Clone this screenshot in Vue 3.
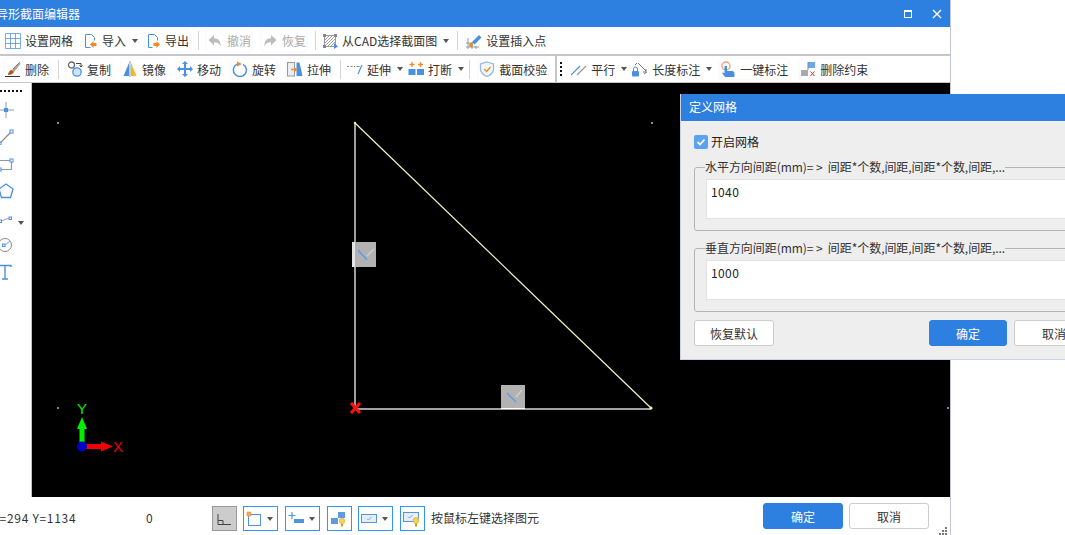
<script setup>
const B = '#4a90e2', O = '#f08a24', G = '#8c8c8c'
const icons = {
  grid: `<path d="M1 1.500h15v15H1zM6 1.500v15M11 1.500v15M1 6.500h15M1 11.500h15" transform="translate(-.5 -1)" fill="none" stroke="${B}" stroke-opacity=".75"/>`,
  imp: `<path d="M3.500 1.500h6l3 3v3M3.500 1.500v13h5" fill="none" stroke="${B}"/><path d="M8 11.500l3.500-3.500v2h3v3h-3v2z" fill="${O}"/>`,
  exp: `<path d="M3.500 1.500h6l3 3v3M3.500 1.500v13h4" fill="none" stroke="${B}"/><path d="M15 11.500L11.500 8v2h-3v3h3v2z" fill="${O}"/>`,
  undo: `<path d="M1.500 7L7 2v3.200c4.500 0 7 3 6.500 8-1-3-3-4-6.500-4V12.500z" fill="#bdbdbd"/>`,
  redo: `<path d="M14.500 7L9 2v3.200c-4.500 0-7 3-6.500 8 1-3 3-4 6.500-4v3.300z" fill="#bdbdbd"/>`,
  cad: `<rect x="2.500" y="2.500" width="11" height="11" fill="none" stroke="#999"/><path d="M3 7l4-4M3 10l7-7M3 13L13 3M6 13l7-7M9 13l4-4" stroke="#888" stroke-width=".8"/><rect x="1" y="1" width="3" height="3" fill="#888"/><rect x="12" y="1" width="3" height="3" fill="#888"/><rect x="1" y="12" width="3" height="3" fill="#888"/><path d="M12 10v6l4-2.500z" fill="${B}"/>`,
  insert: `<path d="M2 5v11M6 9v7M10 13v3M0 14h13M0 10h7" stroke="#999" fill="none"/><path d="M6 9l7-7 2.500 2.500-7 7z" fill="${B}"/><circle cx="5" cy="12" r="2" fill="${O}"/>`,
  del: `<path d="M15 1L7 9l2 2 6.500-8z" fill="#b8a58f"/><path d="M14.500 1.500L8 8" stroke="#777" fill="none"/><path d="M3 14c0-3 2-5 4-5l2 2c-1 2-3 3-6 3z" fill="#b5561f"/><path d="M0 15.500h15" stroke="#333"/>`,
  copy: `<circle cx="4.500" cy="4" r="3" fill="none" stroke="#666" stroke-width="1.300"/><circle cx="10" cy="11" r="4.200" fill="#cfe2f7" stroke="${B}" stroke-width="1.300"/><path d="M9 2.500h5v3M12.500 4.500l1.500 1.500 1.500-1.500" fill="none" stroke="#444"/>`,
  mirror: `<path d="M7 2v13H1.500z" fill="${B}"/><path d="M9 2v13h5.500z" fill="#f5b81f"/><path d="M8 0v16" stroke="#999"/>`,
  move: `<path d="M8 0l3 3H9v4h4V5l3 3-3 3V9H9v4h2l-3 3-3-3h2V9H3v2L0 8l3-3v2h4V3H5z" fill="${B}"/>`,
  rotate: `<path d="M5 3.200A6.500 6.500 0 1 0 11 3.300" fill="none" stroke="${B}" stroke-width="1.400"/><path d="M5 .5l5 2.500-5 2.500z" fill="${O}"/>`,
  stretch: `<rect x=".5" y="1.500" width="7" height="13.500" fill="#eee" stroke="#999"/><path d="M9.500 1.500h3l3 13.500h-6z" fill="${B}"/><path d="M4 8.500h4" stroke="${O}" stroke-width="1.500"/><path d="M7.500 6l3 2.500-3 2.500z" fill="${O}"/>`,
  extend: `<path d="M0 5.500h8" stroke="#888" stroke-dasharray="2 1.500"/><path d="M11 13l4-9" stroke="${B}" stroke-width="1.200"/><path d="M9.500 5.500h3" stroke="#888"/>`,
  brk: `<rect x=".5" y="8" width="7" height="6" fill="${B}"/><rect x="9" y="8" width="7" height="6" fill="${B}"/><path d="M4 1v5M1.500 3.500h5M12.500 1v5M10 3.500h5" stroke="${O}" stroke-width="1.300"/>`,
  check: `<path d="M8 1l6.500 2v5c0 3.500-3 6-6.500 7.500C4.500 14 1.500 11.500 1.500 8V3z" fill="#f4f8fd" stroke="#8fb8ea" stroke-width="1.300"/><path d="M5 8l2.500 2.500L11.500 6" fill="none" stroke="${O}" stroke-width="1.300"/>`,
  para: `<path d="M0 14L9 5" stroke="${B}" stroke-width="1.200"/><path d="M6 14l9-9" stroke="#999" stroke-width="1.200"/>`,
  length: `<rect x="0" y="10" width="7" height="5.500" rx="1" fill="${B}"/><path d="M1.500 10V8a2 2 0 0 1 4 0v2" fill="none" stroke="${B}"/><path d="M3 4l2-2M6 2l8 8M14 8v3h-3" fill="none" stroke="#777"/><path d="M12 13l3-2" stroke="#777"/>`,
  one: `<circle cx="6" cy="5" r="4" fill="none" stroke="#f0a080" stroke-width="1.400"/><path d="M4.500 5h2.500v5h5c1.500 0 2.500 1 2.500 2.500V16H5L2 12l1.500-.5 1 1z" fill="${B}"/>`,
  rm: `<rect x="1" y="9" width="7" height="6" fill="#aaa"/><rect x="8" y="1" width="7" height="6" fill="#6aa8ee"/><path d="M8 1v8" stroke="#888"/><path d="M10.500 10.500l4 4.500M14.500 10.500l-4 4.500" stroke="#d33"/>`,
  point: `<path d="M8 0v5M8 11v5M0 8h5M11 8h5" stroke="#999"/><circle cx="8" cy="8" r="2.500" fill="${B}"/>`,
  line: `<path d="M2 14L13 3" stroke="#888" stroke-width="1.200"/><rect x="12" y="1" width="3" height="3" fill="#fff" stroke="${B}"/><rect x="0" y="13" width="3" height="3" fill="#fff" stroke="${B}"/>`,
  rect: `<path d="M1 4.500h12.500v9H1" fill="none" stroke="#8a9aa5" stroke-width="1.200"/><rect x="12" y="3" width="3" height="3" fill="#fff" stroke="${B}"/><rect x="0" y="12" width="3" height="3" fill="#fff" stroke="${B}"/>`,
  poly: `<path d="M8 1l7 5-2.500 8.500h-9L1 6z" fill="none" stroke="${B}" stroke-width="1.300"/>`,
  pline: `<path d="M2 12c3-2 6-3 9-3.500" fill="none" stroke="#999"/><rect x="1" y="10" width="2.500" height="2.500" fill="#fff" stroke="${B}"/><rect x="11" y="7" width="2.500" height="2.500" fill="#fff" stroke="${B}"/>`,
  circ: `<circle cx="7" cy="8" r="6.500" fill="none" stroke="#888"/><path d="M7 8l5-4" stroke="${B}" stroke-width=".8"/><rect x="4.500" y="7" width="2.500" height="2.500" fill="#fff" stroke="${B}"/>`,
  text: `<path d="M1 3V1.500h12V3M7 1.500v13M4 15h6" fill="none" stroke="${B}" stroke-width="1.400"/>`,
  sCorner: `<path d="M4 4v10.500h13M4 10.500h5v4" fill="none" stroke="#444"/>`,
  sBox: `<rect x="3.500" y="4.500" width="12" height="11" fill="none" stroke="#4f93de"/><rect x="2" y="2" width="4" height="4" fill="#f7a75a" stroke="#d98a3e" stroke-width=".5"/>`,
  sPlus: `<path d="M5 2v7M1.500 5.500h7" stroke="#4f93de" stroke-width="1.200"/><rect x="7" y="9" width="10" height="4" fill="#4f93de"/>`,
  sStep: `<rect x="9" y="2" width="7" height="6" fill="#5d9be0"/><rect x="2" y="8" width="7" height="6" fill="#5d9be0"/><circle cx="13" cy="11" r="2.800" fill="#f5d25a" stroke="#c9a01e" stroke-width=".5"/><rect x="12" y="14" width="2" height="2.500" fill="#c9a01e"/>`,
  sCheck: `<rect x="1.500" y="4.500" width="15" height="8" fill="#e6eefa" stroke="#5b93d8"/><path d="M7 8.500l1.500 1.500 3-3" fill="none" stroke="#5b93d8" stroke-width=".8"/>`,
  sTip: `<rect x="1.500" y="2.500" width="15" height="9" fill="#e6eefa" stroke="#5b93d8"/><path d="M6 6.500l1.500 1.500 3-3" fill="none" stroke="#5b93d8" stroke-width=".8"/><circle cx="14" cy="10.500" r="3" fill="#f5d25a" stroke="#c9a01e" stroke-width=".5"/><rect x="13" y="13.500" width="2" height="3" fill="#c9a01e"/>`,
}
const row1 = [
  { icon: 'grid', label: '设置网格', ml: 5 },
  { icon: 'imp', label: '导入', caret: true, ml: 9 },
  { icon: 'exp', label: '导出', ml: 7 },
  { sep: true, ml: 9 },
  { icon: 'undo', label: '撤消', off: true, ml: 8 },
  { icon: 'redo', label: '恢复', off: true, ml: 11 },
  { sep: true, ml: 9 },
  { icon: 'cad', label: '从CAD选择截面图', caret: true, ml: 6 },
  { sep: true, ml: 8 },
  { icon: 'insert', label: '设置插入点', ml: 8 },
]
const row2 = [
  { icon: 'del', label: '删除', ml: 5 },
  { sep: true, ml: 9 },
  { icon: 'copy', label: '复制', ml: 8 },
  { icon: 'mirror', label: '镜像', ml: 11 },
  { icon: 'move', label: '移动', ml: 11 },
  { icon: 'rotate', label: '旋转', ml: 11 },
  { icon: 'stretch', label: '拉伸', ml: 11 },
  { sep: true, ml: 9 },
  { icon: 'extend', label: '延伸', caret: true, ml: 6 },
  { icon: 'brk', label: '打断', caret: true, ml: 5 },
  { sep: true, ml: 5 },
  { icon: 'check', label: '截面校验', ml: 9 },
  { bar: true, ml: 8 },
  { icon: 'para', label: '平行', caret: true, ml: 10 },
  { icon: 'length', label: '长度标注', caret: true, ml: 5 },
  { icon: 'one', label: '一键标注', ml: 8 },
  { icon: 'rm', label: '删除约束', ml: 12 },
]
const side = ['point', 'line', 'rect', 'poly', 'pline', 'circ', 'text']
const status = [
  { icon: 'sBox', caret: true, ml: 6 },
  { icon: 'sPlus', caret: true, ml: 7 },
  { icon: 'sStep', ml: 7 },
  { icon: 'sCheck', caret: true, ml: 6 },
  { icon: 'sTip', ml: 7 },
]
const gridDots = [[26, 40], [620, 40], [26, 325], [916, 325]]
const groups = [
  { title: '水平方向间距(mm)= >  间距*个数,间距,间距*个数,间距,...', value: '1040' },
  { title: '垂直方向间距(mm)= >  间距*个数,间距,间距*个数,间距,...', value: '1000' },
]
</script>

<template>
  <div class="screen">
    <div class="window">
      <header class="title">
        <span class="title-text">异形截面编辑器</span>
        <span class="win-max"></span>
        <svg class="win-close" width="10" height="10" viewBox="0 0 10 10"><path d="M1 1l8 8M9 1l-8 8" stroke="#fff" stroke-width="1.400" /></svg>
      </header>

      <div v-for="(row, r) in [row1, row2]" :key="r" class="toolbar" :class="r ? 'second' : 'first'">
        <template v-for="(t, i) in row" :key="i">
          <span v-if="t.sep" class="sep" :style="{ marginLeft: t.ml + 'px' }"></span>
          <span v-else-if="t.bar" class="bar" :style="{ marginLeft: t.ml + 'px' }"><i v-for="n in 4" :key="n"></i></span>
          <span v-else class="tool" :class="{ off: t.off, boxed: !t.caret }" :style="{ marginLeft: t.ml + 'px' }">
            <svg width="16" height="16" viewBox="0 0 16 16"><g v-html="icons[t.icon]"></g></svg>
            <span class="label">{{ t.label }}</span>
            <span v-if="t.caret" class="caret"></span>
          </span>
        </template>
      </div>

      <main class="work">
        <aside class="side">
          <div class="dashes"></div>
          <div v-for="s in side" :key="s" class="side-btn">
            <svg width="16" height="16" viewBox="0 0 16 16"><g v-html="icons[s]"></g></svg>
            <span v-if="s === 'pline'" class="caret side-caret"></span>
          </div>
        </aside>
        <div class="canvas">
          <svg class="drawing" width="918" height="414" viewBox="0 0 918 414">
            <rect v-for="(d, i) in gridDots" :key="i" :x="d[0] - 1" :y="d[1] - 1" width="2" height="2" fill="#888" />
            <path d="M323 40V326H619" fill="none" stroke="#a0a0a0" stroke-width="2" />
            <path d="M323 40L619 325" stroke="#f4f4c8" stroke-width="1.200" />
            <rect x="320" y="159" width="24" height="25" fill="#b2b2b2" />
            <rect x="320" y="159" width="3" height="25" fill="#e4e4e4" />
            <path d="M326 167l9 10" stroke="#5c9ce8" stroke-width="1.500" />
            <path d="M335 173l7-7" stroke="#cfcfcf" stroke-width="1.500" />
            <rect x="469" y="302" width="24" height="24" fill="#b2b2b2" />
            <path d="M469 325.500h24" stroke="#fff" />
            <path d="M475 310l9 9" stroke="#5c9ce8" stroke-width="1.500" />
            <path d="M484 314l6-7" stroke="#cfcfcf" stroke-width="1.500" />
            <path d="M319 320l9 10M328 320l-9 10" stroke="#ff1010" stroke-width="3" />
            <circle cx="323" cy="40" r="1.200" fill="#ffff80" />
            <circle cx="619" cy="325" r="1.500" fill="#ffff80" />
            <path d="M50 346v18" stroke="#00f000" stroke-width="5" />
            <path d="M45 346l5-12 5 12z" fill="#00f000" />
            <path d="M50 363.500h20" stroke="#f00000" stroke-width="5" />
            <path d="M69 358.500l12 5-12 5z" fill="#f00000" />
            <circle cx="50" cy="363.500" r="5" fill="#0000c8" />
            <text x="50" y="331" class="axis" fill="#00f000">Y</text>
            <text x="86" y="369" class="axis" fill="#f00000">X</text>
          </svg>
        </div>
      </main>

      <footer class="status">
        <div class="coords">X=294 Y=1134</div>
        <div class="count">0</div>
        <button class="s-btn active"><svg width="18" height="18" viewBox="0 0 18 18"><g v-html="icons.sCorner"></g></svg></button>
        <button v-for="(s, i) in status" :key="i" class="s-btn" :class="{ wide: s.caret }" :style="{ marginLeft: s.ml + 'px' }">
          <svg width="18" height="18" viewBox="0 0 18 18"><g v-html="icons[s.icon]"></g></svg>
          <span v-if="s.caret" class="caret"></span>
        </button>
        <div class="hint">按鼠标左键选择图元</div>
        <button class="btn primary ok">确定</button>
        <button class="btn cancel">取消</button>
        <svg class="grip" width="10" height="8" viewBox="0 0 10 8"><path d="M7 0h2v2H7zM4 3h2v2H4zM7 3h2v2H7zM1 6h2v2H1zM4 6h2v2H4zM7 6h2v2H7z" fill="#777" /></svg>
      </footer>
    </div>

    <section class="dialog">
      <header class="dlg-title">定义网格</header>
      <div class="dlg-body">
        <label class="check">
          <span class="box"><svg width="10" height="10" viewBox="0 0 10 10"><path d="M1.500 5l2.500 2.500 4.500-5" fill="none" stroke="#fff" stroke-width="1.800" /></svg></span>
          <span class="check-text">开启网格</span>
        </label>
        <fieldset v-for="g in groups" :key="g.value" class="group">
          <legend>{{ g.title }}</legend>
          <div class="input">{{ g.value }}</div>
        </fieldset>
        <div class="dlg-actions">
          <button class="btn">恢复默认</button>
          <button class="btn primary dlg-ok">确定</button>
          <button class="btn dlg-cancel">取消</button>
        </div>
      </div>
    </section>
  </div>
</template>

<style>
html, body { margin: 0; background: #fff; overflow: hidden; }
</style>

<style scoped>
.screen {
  position: relative;
  width: 1065px;
  height: 535px;
  overflow: hidden;
  background: #fff;
  font: 12px/17px "Noto Sans CJK SC", "Liberation Sans", sans-serif;
  color: #333;
}
.window {
  width: 950px;
  height: 535px;
  border-right: 1px solid #c3c8d2;
  display: flex;
  flex-direction: column;
}
.title {
  height: 27px;
  flex: none;
  background: #2d7fe0;
  color: #fff;
  display: flex;
  align-items: center;
}
.title-text { margin-left: -4px; flex: 1; }
.win-max {
  width: 6px;
  height: 5px;
  border: 1px solid #fff;
  border-top-width: 2px;
  margin-right: 20px;
}
.win-close { margin-right: 8px; }
.toolbar {
  display: flex;
  align-items: center;
  flex: none;
  background: #fff;
}
.first { height: 27px; border-bottom: 2px solid #c4c6c9; }
.second { height: 26px; border-bottom: 1px solid #c4c6c9; }
.tool { display: flex; align-items: center; white-space: nowrap; height: 20px; border-radius: 3px; }
.boxed { box-shadow: 0 0 0 2px #fbfbfb; }
.tool svg { flex: none; margin-right: 4px; }
.off { color: #aaa; }
.sep { width: 1px; height: 19px; background: #d5d5d5; flex: none; }
.bar {
  width: 6px;
  height: 26px;
  flex: none;
  border-left: 2px solid #c4c6c9;
  box-sizing: border-box;
  display: flex;
  flex-direction: column;
  align-items: flex-end;
  justify-content: center;
  gap: 2px;
}
.bar i { width: 2px; height: 2px; background: #111; margin-right: -1px; }
.caret {
  width: 0;
  height: 0;
  border: 3.5px solid transparent;
  border-top: 4px solid #555;
  border-bottom: 0;
  margin-left: 6px;
  flex: none;
}
.work { flex: 1; display: flex; min-height: 0; }
.side {
  width: 32px;
  flex: none;
  box-sizing: border-box;
  border-right: 1px solid #c4c6c9;
  background: #fff;
}
.dashes {
  height: 2px;
  margin: 7px 8px 4px 0;
  background: repeating-linear-gradient(90deg, #111 0 2px, transparent 2px 4px);
}
.side-btn {
  width: 19px;
  height: 27px;
  display: flex;
  align-items: center;
  position: relative;
}
.side-btn svg { margin-left: -2px; flex: none; }
.side-caret { position: absolute; left: 18px; top: 17px; margin: 0; }
.canvas { flex: 1; background: #000; min-width: 0; }
.drawing { display: block; }
.axis { font: 15px "Liberation Sans", sans-serif; text-anchor: middle; }
.status {
  height: 38px;
  flex: none;
  display: flex;
  align-items: flex-start;
  position: relative;
  background: #fff;
}
.coords { margin: 12px 0 0 -8px; width: 154px; white-space: nowrap; flex: none; letter-spacing: .7px; }
.count { margin-top: 12px; width: 66px; flex: none; }
.s-btn {
  width: 25px;
  height: 25px;
  margin-top: 9px;
  padding: 0 0 0 1px;
  box-sizing: border-box;
  flex: none;
  border: 1px solid #2f96f5;
  background: #fff;
  display: flex;
  align-items: center;
}
.s-btn.wide { width: 35px; }
.s-btn.active { background: #ccc; border-color: #999; }
.s-btn .caret { margin-left: 4px; }
.hint { margin: 12px 0 0 6px; flex: 1; white-space: nowrap; }
.btn {
  width: 80px;
  height: 26px;
  box-sizing: border-box;
  border: 1px solid #ccc;
  border-radius: 3px;
  background: #fff;
  color: #333;
  font: inherit;
  padding: 0;
  flex: none;
}
.primary { background: #2d7fe0; border-color: #2d7fe0; color: #fff; }
.ok { margin-top: 6px; }
.cancel { margin: 6px 21px 0 6px; }
.grip { position: absolute; right: 2px; bottom: 0; }
.dialog {
  position: absolute;
  left: 680px;
  top: 94px;
  width: 430px;
  height: 266px;
  background: #eee;
  box-sizing: border-box;
  border: 1px solid #c9d3e2;
  border-width: 0 0 1px 1px;
}
.dlg-title {
  height: 27px;
  background: #2d7fe0;
  color: #fff;
  line-height: 26px;
  padding-left: 8px;
}
.dlg-body { padding: 14px 14px 0 13px; }
.check { display: flex; align-items: center; height: 14px; color: #222; }
.check-text { margin-top: -1px; }
.box {
  width: 14px;
  height: 14px;
  margin-right: 3px;
  background: #5aa2f2;
  border-radius: 2px;
  display: flex;
  align-items: center;
  justify-content: center;
}
.group {
  margin: 0;
  padding: 3px 0 11px 11px;
  border: 1px solid #b4b4b4;
  border-radius: 3px;
  box-sizing: border-box;
  height: 72px;
}
.check + .group { margin-top: 10px; }
.group + .group { margin-top: 9px; }
.group legend {
  padding: 0 0 2px;
  margin-left: -1px;
  white-space: pre;
  line-height: 15px;
  letter-spacing: -.06px;
  color: #333;
}
.input {
  height: 40px;
  box-sizing: border-box;
  background: #fff;
  border: 1px solid #e2e2e2;
  padding: 3px 4px;
  color: #222;
  letter-spacing: .4px;
}
.dlg-actions { display: flex; margin-top: 8px; }
.dlg-ok { width: 78px; margin-left: 155px; }
.dlg-cancel { margin-left: 7px; }
</style>
